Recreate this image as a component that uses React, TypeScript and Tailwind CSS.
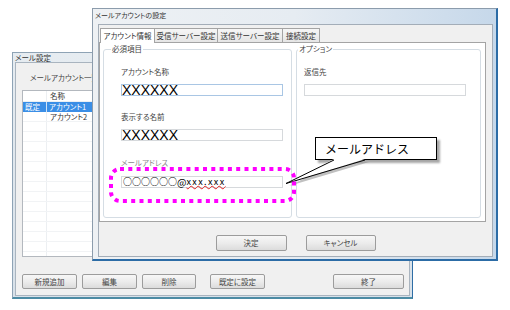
import React from 'react';

const jp = "font-['Noto_Sans_CJK_JP','Noto_Sans_CJK_SC',sans-serif] [font-feature-settings:'palt']";

function Btn({ label, className }: { label: string; className: string }) {
  return (
    <div
      className={`flex items-center justify-center rounded-[2px] border border-[#9c9c9c] bg-linear-to-b from-[#f7f7f7] via-[#ececec] to-[#dcdcdc] text-[7.5px] leading-none text-[#444] ${className}`}
    >
      {label}
    </div>
  );
}

function BackWindow() {
  const emptyRows = Array.from({ length: 14 });
  return (
    <div className="absolute left-[12px] top-[52px] flex h-[247px] w-[401px] flex-col border border-[#8ea3b5] border-r-[#2f6ea6] border-b-2 border-b-[#4c8ba4] bg-linear-to-b from-[#e6ecf1] to-[#d8e1e9]">
      <div className="h-[9px] pl-[2px] text-[7.5px] leading-[9px] text-[#333]">メール設定</div>
      <div className="mx-[2px] mb-[1px] flex flex-1 flex-col border border-[#a9b4bf] bg-[#f0f0f0]">
        <div className="mt-[10px] h-[10px] pl-[14px] text-[7.5px] leading-[10px] text-[#444]">メールアカウント一覧</div>

        {/* account list */}
        <div className="ml-[6px] mt-[7px] h-[167px] w-[262px] overflow-hidden border border-[#b3b8be] bg-white text-[7.5px] text-[#333]">
          <div className="flex h-[11px] items-center border-b border-[#eceff2]">
            <div className="h-full w-[24px] border-r border-[#eceff2]"></div>
            <div className="pl-[3px] leading-none">名称</div>
          </div>
          <div className="flex h-[10px] items-center bg-[#3a8ee6] leading-none text-white">
            <div className="flex h-full w-[24px] items-center border-r border-[#cfe3f8] pl-[2px]">既定</div>
            <div className="pl-[2px]">アカウント1</div>
          </div>
          <div className="flex h-[10px] items-center border-b border-[#f1f3f5] leading-none">
            <div className="h-full w-[24px] border-r border-[#eceff2]"></div>
            <div className="pl-[3px]">アカウント2</div>
          </div>
          {emptyRows.map((_, i) => (
            <div key={i} className="flex h-[10px] border-b border-[#f1f3f5]">
              <div className="h-full w-[24px] border-r border-[#eceff2]"></div>
            </div>
          ))}
        </div>

        <div className="ml-[6px] mr-[5px] mt-[17px] flex items-center">
          <Btn label="新規追加" className="h-[15px] w-[55px]" />
          <Btn label="編集" className="ml-[5px] h-[15px] w-[55px]" />
          <Btn label="削除" className="ml-[5px] h-[15px] w-[54px]" />
          <Btn label="既定に設定" className="ml-[14px] h-[15px] w-[55px]" />
          <Btn label="終了" className="ml-auto h-[15px] w-[71px]" />
        </div>
      </div>
    </div>
  );
}

function Field({ label, muted, focus, children }: { label: string; muted?: boolean; focus?: boolean; children?: React.ReactNode }) {
  return (
    <div className="flex flex-col">
      <div className={`h-[10px] text-[7.5px] leading-[10px] ${muted ? 'text-[#8a8a8a]' : 'text-[#444]'}`}>{label}</div>
      <div
        className={`h-[12px] w-[162px] border bg-white ${focus ? 'border-[#a9c6e4]' : 'border-[#d6d9dc]'} ${muted ? 'mt-[8px]' : 'mt-[7px]'}`}
      >
        {children}
      </div>
    </div>
  );
}

function Crosses() {
  return (
    <div className="font-['Liberation_Sans',sans-serif] text-[14px] leading-[10px] text-black [font-feature-settings:normal]">
      XXXXXX
    </div>
  );
}

function FrontWindow() {
  const tabs = [
    { name: 'アカウント情報', w: 'w-[55px]', active: true },
    { name: '受信サーバー設定', w: 'w-[63px]', active: false },
    { name: '送信サーバー設定', w: 'w-[65px]', active: false },
    { name: '接続設定', w: 'w-[37px]', active: false },
  ];

  return (
    <div className="absolute left-[92px] top-[8px] flex h-[253px] w-[406px] flex-col border border-[#8c9cac] border-r-2 border-r-[#2c6ca6] border-b-2 border-b-[#2c6ca6] bg-linear-to-r from-[#eef1f4] via-[#e6ecf2] to-[#c6d8ea]">
      <div className="h-[15px] pl-[2px] pt-[1px] text-[7px] leading-[10px] text-[#333]">メールアカウントの設定</div>

      <div className="mb-[2px] ml-[5px] mr-[3px] flex flex-1 flex-col border border-[#a3adb8] bg-[#f0f0f0]">
        {/* tabs */}
        <div className="ml-[1px] mt-[3px] flex h-[15px]">
          {tabs.map((t) => (
            <div
              key={t.name}
              className={`flex h-full items-start justify-center border border-b-0 border-[#a4a4a4] pt-[2px] text-[7.5px] leading-[10px] text-[#333] ${t.w} ${
                t.active ? 'relative z-10 bg-white' : 'border-l-0 bg-linear-to-b from-[#f6f6f6] to-[#e4e4e4]'
              }`}
            >
              {t.name}
            </div>
          ))}
        </div>

        {/* tab panel */}
        <div className="-mt-[1px] flex h-[180px] w-[387px] gap-[4px] border border-[#a4a4a4] bg-white pb-[3px] pl-[3px] pr-[4px] pt-[1px]">
          <fieldset className="w-[189px] rounded-[3px] border border-[#d5dde4]">
            <legend className="ml-[7px] px-[1px] text-[7.5px] leading-[10px] text-[#444]">必須項目</legend>
            <div className="flex flex-col pl-[17px]">
              <div className="mt-[13px]">
                <Field label="アカウント名称" focus>
                  <Crosses />
                </Field>
              </div>
              <div className="mt-[16px]">
                <Field label="表示する名前">
                  <Crosses />
                </Field>
              </div>
              <div className="mt-[17px]">
                <Field label="メールアドレス" muted>
                  <div className="flex h-[10px] items-center pl-[1px] text-[9px] leading-[10px] text-black [font-feature-settings:normal]">
                    <span className="font-medium">○○○○○○</span>
                    <span className="text-[10px] leading-[10px]">@</span>
                    <span className="tracking-[1.4px] underline decoration-wavy decoration-[#e02020] decoration-[0.8px] underline-offset-[0px]">xxx.xxx</span>
                  </div>
                </Field>
              </div>
            </div>
          </fieldset>

          <fieldset className="flex-1 rounded-[3px] border border-[#d5dde4]">
            <legend className="ml-[1px] px-[1px] text-[7.5px] leading-[10px] text-[#444]">オプション</legend>
            <div className="flex flex-col pl-[7px]">
              <div className="mt-[13px]">
                <Field label="返信先" />
              </div>
            </div>
          </fieldset>
        </div>

        <div className="mt-[13px] flex justify-center gap-[19px]">
          <Btn label="決定" className="h-[16px] w-[71px]" />
          <Btn label="キャンセル" className="h-[16px] w-[70px]" />
        </div>
      </div>
    </div>
  );
}

export default function App() {
  return (
    <div className={`relative h-[310px] w-[510px] overflow-hidden bg-white text-[#333] ${jp}`}>
      <BackWindow />
      <FrontWindow />

      {/* callout box */}
      <div className="absolute left-[315px] top-[137px] h-[23px] w-[122px] border border-black bg-white pl-[9px] text-[12px] leading-[21px] text-black shadow-[3px_3px_2px_rgba(0,0,0,0.35)] [font-feature-settings:normal]">
        メールアドレス
      </div>

      {/* callout pointer and magenta highlight */}
      <svg className="pointer-events-none absolute left-0 top-0" width={510} height={310}>
        <polygon points="337,162 369,162 289,186" fill="#8c8c8c" opacity={0.55} />
        <polygon points="334,159 365,159 286,183.5" fill="#fff" />
        <polyline points="334,160 286,183.5 365,160" fill="none" stroke="#000" strokeWidth={1} />
        <rect
          x={111}
          y={169}
          width={183}
          height={32}
          rx={9}
          fill="none"
          stroke="#ff00ff"
          strokeWidth={4}
          strokeDasharray="4 4.3"
        />
      </svg>
    </div>
  );
}
